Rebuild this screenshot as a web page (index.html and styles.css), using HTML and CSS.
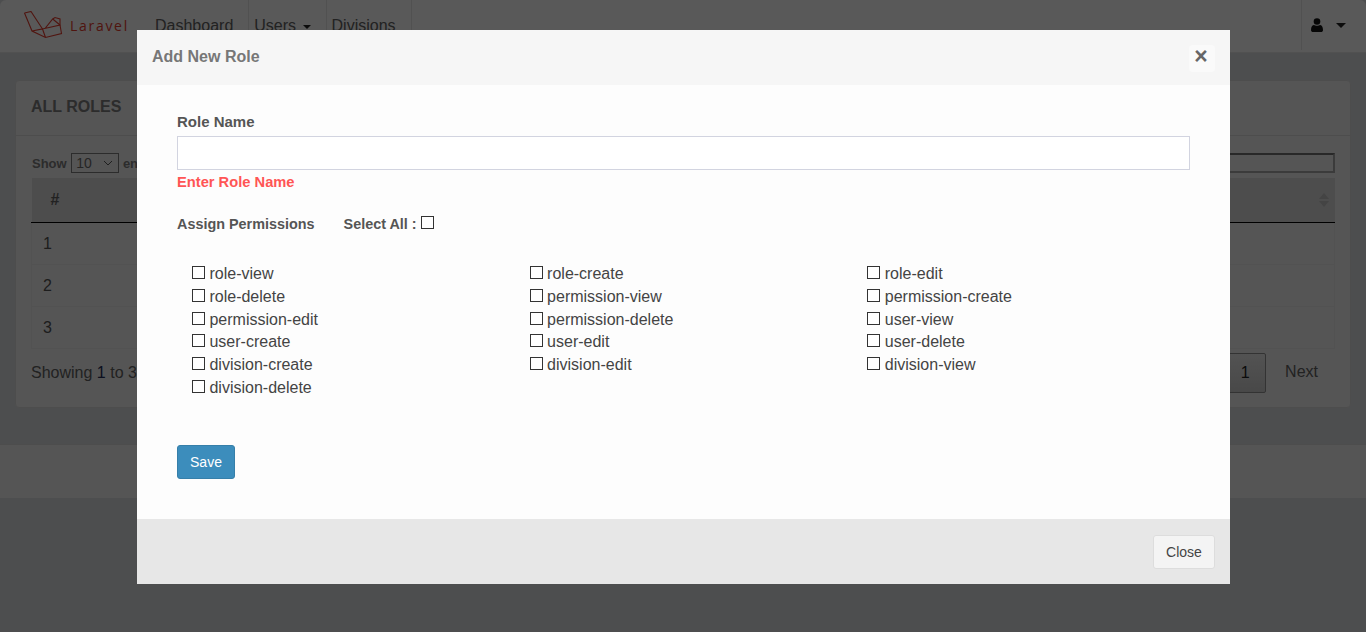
FILE: index.html

```html
<!DOCTYPE html>
<html lang="en">
<head>
    <meta charset="UTF-8">
    <meta name="viewport" content="width=device-width, initial-scale=1.0">
    <title>Roles</title>
    <link rel="stylesheet" href="styles.css">
</head>
<body>
    <nav class="navbar">
        <a class="brand" href="#">
            <svg class="brand-logo" width="42" height="30" viewBox="0 0 42 30" fill="none" stroke="#d9392b" stroke-width="1.100">
                <path d="M1.500 2 L8 .5 L19.500 18 L37 14 L37 8 L32 6.500 L29.700 8 L22 17.500"/>
                <path d="M1.500 2 L9 20 L22.500 26.500 L38.500 22.500 L37 14 M9 20 L19.500 18 L22.500 26.500 M29.700 8 L37 14"/>
            </svg>
            <span class="brand-name">Laravel</span>
        </a>
        <ul class="nav-links">
            <li><a href="#">Dashboard</a></li>
            <li><a href="#">Users <span class="caret"></span></a></li>
            <li><a href="#">Divisions</a></li>
        </ul>
        <div class="nav-user">
            <svg width="12" height="14" viewBox="0 0 12 14" fill="#111">
                <circle cx="6" cy="3.500" r="3.300"/>
                <path d="M0 12 C0 8.500 1.500 7 3 7 C4 8 8 8 9 7 C10.500 7 12 8.500 12 12 C12 13.500 11 14 10 14 L2 14 C1 14 0 13.500 0 12 Z"/>
            </svg>
            <span class="caret caret-big"></span>
        </div>
    </nav>

    <div class="content">
        <div class="panel">
            <div class="panel-heading">ALL ROLES</div>
            <div class="panel-body">
                <div class="table-controls">
                    <label class="length-label">Show
                        <select class="length-select"><option>10</option></select>
                        entries</label>
                    <input class="search-box" type="text">
                </div>
                <table class="roles-table">
                    <thead>
                        <tr>
                            <th class="col-num">#</th>
                            <th>Name<span class="sort-icon"></span></th>
                        </tr>
                    </thead>
                    <tbody>
                        <tr><td>1</td><td></td></tr>
                        <tr><td>2</td><td></td></tr>
                        <tr><td>3</td><td></td></tr>
                    </tbody>
                </table>
                <div class="table-footer">
                    <span>Showing <span class="num">1</span> to 3 of 3 entries</span>
                    <div class="pagination">
                        <a class="page-current" href="#">1</a>
                        <a class="page-next" href="#">Next</a>
                    </div>
                </div>
            </div>
        </div>
    </div>
    <footer class="page-footer"></footer>

    <div class="overlay">
        <div class="modal">
            <div class="modal-header">
                <h4>Add New Role</h4>
                <button class="modal-x">&times;</button>
            </div>
            <div class="modal-body">
                <label class="field-label" for="roleName">Role Name</label>
                <input class="role-input" id="roleName" type="text">
                <div class="field-error">Enter Role Name</div>

                <div class="assign-row">
                    <span class="assign-title">Assign Permissions</span>
                    <label class="select-all">Select All : <input type="checkbox"></label>
                </div>

                <div class="perm-grid">
                    <label><input type="checkbox"> role-view</label>
                    <label><input type="checkbox"> role-create</label>
                    <label><input type="checkbox"> role-edit</label>
                    <label><input type="checkbox"> role-delete</label>
                    <label><input type="checkbox"> permission-view</label>
                    <label><input type="checkbox"> permission-create</label>
                    <label><input type="checkbox"> permission-edit</label>
                    <label><input type="checkbox"> permission-delete</label>
                    <label><input type="checkbox"> user-view</label>
                    <label><input type="checkbox"> user-create</label>
                    <label><input type="checkbox"> user-edit</label>
                    <label><input type="checkbox"> user-delete</label>
                    <label><input type="checkbox"> division-create</label>
                    <label><input type="checkbox"> division-edit</label>
                    <label><input type="checkbox"> division-view</label>
                    <label><input type="checkbox"> division-delete</label>
                </div>

                <button class="btn-save">Save</button>
            </div>
            <div class="modal-footer">
                <button class="btn-close">Close</button>
            </div>
        </div>
    </div>
</body>
</html>
```

FILE: styles.css

```css
html, body {
    height: 100%;
}
body {
    margin: 0;
    overflow: hidden;
    font-family: "Liberation Sans", Arial, sans-serif;
    font-size: 16px;
    line-height: 1.42857;
    color: #5c5c5c;
    background-color: #d2d4d7;
}
a {
    color: inherit;
    text-decoration: none;
}

/* navbar */
.navbar {
    display: flex;
    align-items: stretch;
    height: 52px;
    background-color: #f0f0f0;
    border-bottom: 1px solid #dcdcdc;
    border-radius: 6px 6px 0 0;
}
.brand {
    display: flex;
    align-items: center;
    width: 140px;
    padding-left: 23px;
    box-sizing: border-box;
    flex: none;
}
.brand-name {
    margin-left: 5px;
    font-size: 14px;
    letter-spacing: 1.7px;
    color: #d9392b;
    font-family: "Open Sans", sans-serif;
}
.nav-links {
    display: flex;
    list-style: none;
    margin: 0;
    padding: 0;
}
.nav-links li {
    margin-bottom: 2px;
    border-right: 1px solid #dcdcdc;
}
.nav-links a {
    display: block;
    padding: 14px 15px 0 5px;
    line-height: 23px;
}
.nav-links li:first-child a {
    padding-left: 15px;
}
.caret {
    display: inline-block;
    width: 0;
    height: 0;
    margin-left: 2px;
    vertical-align: middle;
    border-top: 4px solid #222;
    border-left: 4px solid transparent;
    border-right: 4px solid transparent;
}
.caret-big {
    margin-left: 13px;
    border-top-width: 5px;
    border-left-width: 5px;
    border-right-width: 5px;
}
.nav-user {
    display: flex;
    align-items: center;
    margin-left: auto;
    margin-bottom: 2px;
    padding: 0 20px 0 9px;
    border-left: 1px solid #dcdcdc;
}

/* table page behind the dialog */
.content {
    padding: 27px 15px 0;
}
.panel {
    height: 326px;
    background-color: #e6e6e6;
    border: 1px solid #d2d2d2;
    border-radius: 4px;
}
.panel-heading {
    height: 54px;
    padding-left: 15px;
    line-height: 52px;
    font-weight: bold;
    color: #777;
    border-bottom: 1px solid #d2d2d2;
}
.panel-body {
    padding: 17px 15px 0;
}
.table-controls {
    display: flex;
    justify-content: space-between;
    align-items: center;
    height: 20px;
    padding-left: 1px;
    font-size: 13px;
    font-weight: bold;
    color: #777;
}
.length-select {
    appearance: none;
    width: 48px;
    height: 20px;
    margin-left: 1px;
    padding: 0 0 0 4px;
    font-size: 14px;
    font-family: inherit;
    color: #666;
    background: #e6e6e6 url("data:image/svg+xml,%3Csvg xmlns='http://www.w3.org/2000/svg' width='10' height='6'%3E%3Cpath d='M1 1l4 4 4-4' fill='none' stroke='%23555'/%3E%3C/svg%3E") no-repeat right 5px center;
    border: 1px solid #777;
}
.search-box {
    width: 120px;
    height: 20px;
    box-sizing: border-box;
    background: #e6e6e6;
    border: 2px solid #a0a0a0;
    border-top-color: #6e6e6e;
}
.roles-table {
    width: 100%;
    margin-top: 5px;
    border-collapse: collapse;
}
.roles-table th {
    position: relative;
    box-sizing: border-box;
    height: 44px;
    padding: 2px 19px 0;
    text-align: left;
    color: #5c5c5c;
    background-color: #d0d0d0;
    border-bottom: 1px solid #000;
}
.roles-table td {
    box-sizing: border-box;
    height: 42px;
    padding: 2px 11px 0;
    color: #505050;
    border: 1px solid #dedede;
}
.col-num {
    width: 200px;
}
.sort-icon::before,
.sort-icon::after {
    content: "";
    position: absolute;
    right: 6px;
    border-left: 5px solid transparent;
    border-right: 5px solid transparent;
}
.sort-icon::before {
    top: 15px;
    border-bottom: 6px solid #b8b8b8;
}
.sort-icon::after {
    top: 23px;
    border-top: 6px solid #b8b8b8;
}
.table-footer {
    display: flex;
    justify-content: space-between;
    padding-top: 4px;
}
.table-footer > span {
    margin-top: 9px;
}
.num {
    color: #222c55;
}
.pagination {
    display: flex;
    align-items: center;
}
.page-current {
    width: 40px;
    height: 38px;
    line-height: 38px;
    text-align: center;
    color: #222;
    background: linear-gradient(#e0e0e0, #c4c4c4);
    border: 1px solid #8a8a8a;
    border-radius: 2px;
}
.page-next {
    padding: 0 17px 0 19px;
    color: #5c5c5c;
}
.page-footer {
    height: 53px;
    margin-top: 36px;
    background-color: #e6e6e6;
    border-top: 1px solid #d2d2d2;
}

/* dialog */
.overlay {
    position: fixed;
    top: 0;
    left: 0;
    right: 0;
    bottom: 0;
    background-color: rgba(0, 0, 0, 0.63);
}
.modal {
    width: 1093px;
    margin: 30px 0 0 137px;
    background-color: #fdfdfd;
}
.modal-header {
    display: flex;
    align-items: center;
    justify-content: space-between;
    height: 55px;
    padding: 0 15px;
    background-color: #f6f6f6;
}
.modal-header h4 {
    margin: 0;
    font-size: 16px;
    color: #777;
}
.modal-x {
    width: 26px;
    height: 27px;
    margin-top: 1px;
    padding: 0 2px 3px 0;
    font-family: inherit;
    font-size: 23px;
    font-weight: bold;
    line-height: 1;
    color: #666;
    background-color: #fafafa;
    border: none;
    border-radius: 4px;
}
.modal-body {
    height: 434px;
    box-sizing: border-box;
    padding: 26px 40px 0;
    color: #555;
    font-size: 14px;
}
.field-label {
    display: block;
    height: 25px;
    font-size: 15px;
    line-height: 21px;
    font-weight: bold;
}
.role-input {
    display: block;
    width: 100%;
    height: 34px;
    box-sizing: border-box;
    background: #fff;
    border: 1px solid #d2d4e0;
}
.field-error {
    margin-top: 2px;
    font-size: 14.7px;
    line-height: 20px;
    font-weight: bold;
    color: #ff5555;
}
.assign-row {
    display: flex;
    align-items: center;
    gap: 29px;
    margin-top: 22px;
    font-size: 14.4px;
    line-height: 20px;
    font-weight: bold;
}
.select-all input {
    margin: 0;
    vertical-align: 0;
}
input[type="checkbox"] {
    appearance: none;
    width: 13px;
    height: 13px;
    background: #fff;
    border: 1px solid #333;
}
.perm-grid {
    display: grid;
    grid-template-columns: repeat(3, 1fr);
    margin-top: 28.9px;
    font-size: 16px;
    color: #444;
}
.perm-grid label {
    padding-left: 15px;
}
.perm-grid input {
    margin: 0;
}
.btn-save {
    display: block;
    width: 58px;
    height: 34px;
    margin-top: 45px;
    padding: 0;
    font-family: inherit;
    font-size: 14px;
    color: #fff;
    background-color: #3c8dbc;
    border: 1px solid #367fa9;
    border-radius: 3px;
}
.modal-footer {
    display: flex;
    justify-content: flex-end;
    align-items: center;
    height: 65px;
    padding-right: 15px;
    background-color: #e7e7e7;
}
.btn-close {
    width: 62px;
    height: 34px;
    padding: 0;
    font-family: inherit;
    font-size: 14px;
    color: #444;
    background-color: #f4f4f4;
    border: 1px solid #ddd;
    border-radius: 3px;
}
```
